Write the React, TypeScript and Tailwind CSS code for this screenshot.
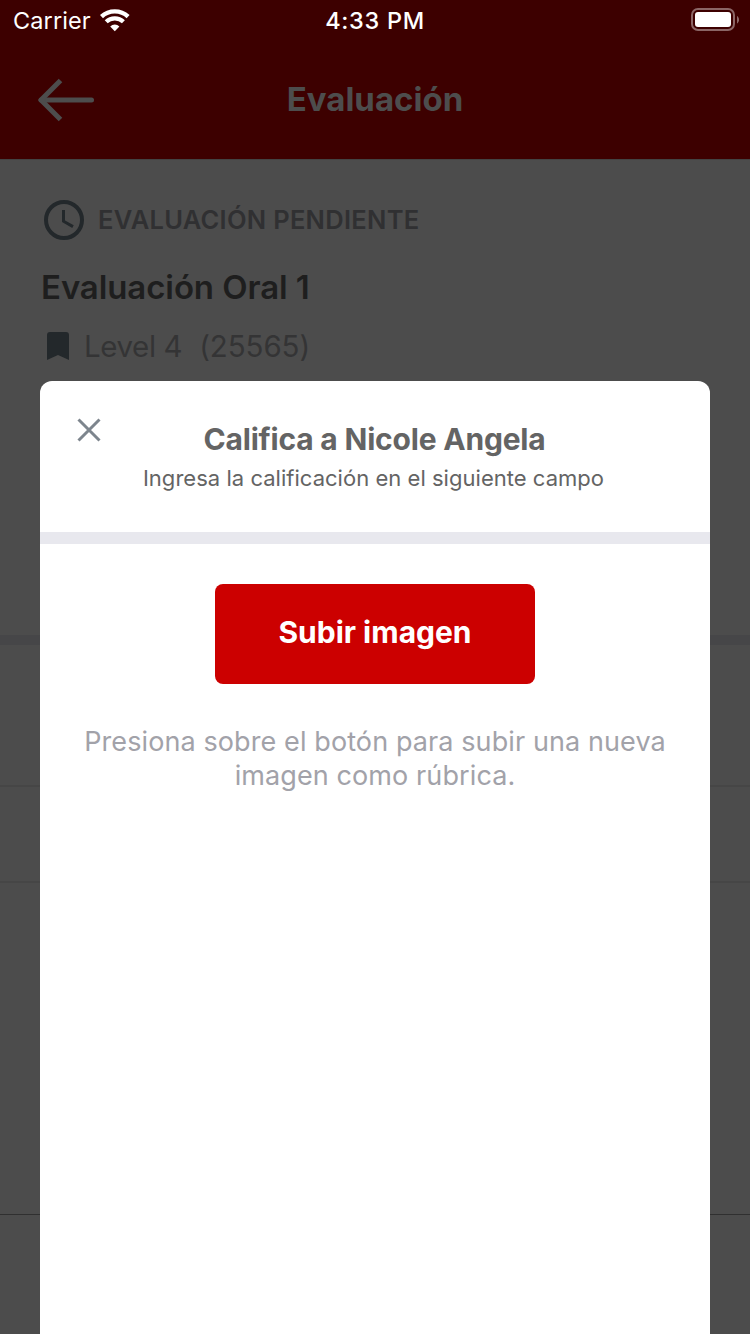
function StatusBar() {
  return (
    <div className="grid h-[41px] grid-cols-3 items-center pl-[13px] pr-[11px] text-white">
      <div className="flex items-center gap-[9px]">
        <span className="pt-px text-[23.5px] leading-10 tracking-[0.1px]">Carrier</span>
        <svg width="30" height="23" viewBox="0 0 30 23" fill="none" stroke="#fff" aria-hidden="true">
          <path d="M1.500 7.600a19.500 19.500 0 0 1 26.600 0" strokeWidth="4.400" />
          <path d="M6.200 12.800a12.300 12.300 0 0 1 17.200 0" strokeWidth="4.200" />
          <path d="M10.200 17.400a6.800 6.800 0 0 1 9.200 0L14.800 22.200z" fill="#fff" stroke="none" />
        </svg>
      </div>
      <span className="pr-0.5 pt-px text-center text-[23.5px] font-medium leading-10 tracking-[0.7px]">4:33 PM</span>
      <svg className="mb-[3px] justify-self-end" width="48" height="24" viewBox="0 0 48 24" fill="none" aria-hidden="true">
        <rect x="1" y="2" width="42" height="21" rx="6" stroke="#8b6666" strokeWidth="2" />
        <rect x="4" y="5" width="36" height="15" rx="3" fill="#fff" />
        <path d="M46 9c2.700 1.500 2.700 6 0 7.500z" fill="#8b6666" />
      </svg>
    </div>
  );
}

function Header() {
  return (
    <header className="h-40 border-b border-[#434343] bg-[#3d0000]">
      <StatusBar />
      <div className="grid h-[118px] grid-cols-3 items-center px-[38px] text-[#4d4d4d]">
        <svg width="57" height="44" viewBox="0 0 57 44" fill="none" stroke="currentColor" strokeWidth="5" aria-hidden="true">
          <path d="M3 22H53.500" strokeLinecap="round" />
          <path d="M22.500 2.500L3 22L22.500 41.500" strokeLinejoin="round" />
        </svg>
        <h1 className="whitespace-nowrap pb-[3px] text-center text-[33px] font-bold leading-[40px]">Evaluación</h1>
      </div>
    </header>
  );
}

function Summary() {
  return (
    <section className="flex h-[475px] flex-col px-10 pt-10">
      <div className="flex h-10 items-center gap-[14px] pl-1">
        <svg width="40" height="40" viewBox="0 0 40 40" fill="none" stroke="#23282b" aria-hidden="true">
          <circle cx="20" cy="20" r="18" strokeWidth="4" />
          <path d="M19.500 10V21.200L29 26.600" strokeWidth="3" />
        </svg>
        <span className="text-[25.5px] font-semibold tracking-[0.28px] text-[#303032]">EVALUACIÓN PENDIENTE</span>
      </div>
      <h2 className="mt-[27px] pl-px text-[33px] font-semibold leading-[40px] tracking-[-0.1px] text-[#1e1e1e]">Evaluación Oral 1</h2>
      <div className="mt-[19px] flex h-10 items-center pl-[7px] text-[29.500px] tracking-[-0.250px] text-[#343435]">
        <svg width="22" height="28" viewBox="0 0 22 28" aria-hidden="true">
          <path d="M3 0H19a3 3 0 0 1 3 3V28L11 23L0 28V3a3 3 0 0 1 3-3z" fill="#23282b" />
        </svg>
        <span className="ml-[15px] tracking-[-0.4px]">Level 4</span>
        <span className="ml-[17px] tracking-[-0.1px]">(25565)</span>
      </div>
    </section>
  );
}

function ScoreDialog() {
  return (
    <div role="dialog" className="absolute inset-x-10 bottom-0 top-[381px] flex flex-col rounded-t-xl bg-white">
      <div className="flex h-[151px] flex-col items-center pt-[38px]">
        <button aria-label="Cerrar" className="absolute left-[37px] top-[37px]">
          <svg width="24" height="24" viewBox="0 0 24 24" stroke="#7d858d" strokeWidth="3" aria-hidden="true">
            <path d="M1.500 1.500L22.500 22.500M22.500 1.500L1.500 22.500" />
          </svg>
        </button>
        <h3 className="pr-px text-[30px] font-bold leading-[40px] tracking-[-0.2px] text-[#646464]">Califica a Nicole Angela</h3>
        <p className="pr-[3px] text-[22px] leading-[38px] tracking-[0.030px] text-[#646464]">Ingresa la calificación en el siguiente campo</p>
      </div>
      <div className="h-3 bg-[#e8e8ee]" />
      <div className="flex flex-col items-center pt-10">
        <button className="h-[100px] w-[320px] rounded-lg bg-[#cc0000] pb-[3px] text-[30px] font-bold text-white">Subir imagen</button>
        <p className="mt-[41px] text-center text-[27px] leading-[34px] tracking-[0.100px] text-[#a2a2a9]">
          Presiona sobre el botón para subir una nueva
          <br />
          imagen como rúbrica.
        </p>
      </div>
    </div>
  );
}

export default function App() {
  return (
    <main className="relative flex h-[1334px] w-[750px] flex-col overflow-hidden bg-[#4c4c4c] font-['Inter',sans-serif]">
      <Header />
      <Summary />
      <div className="h-[10px] bg-[#464648]" />
      <div className="h-[142px] border-b-2 border-[#464646]" />
      <div className="h-24 border-b-2 border-[#464646]" />
      <div className="h-[332px] border-b border-[#303030]" />
      <ScoreDialog />
    </main>
  );
}
